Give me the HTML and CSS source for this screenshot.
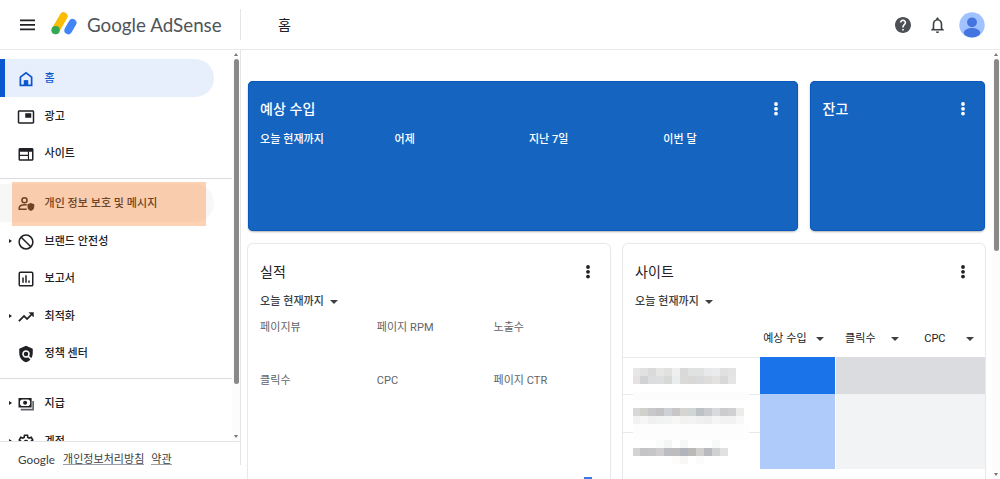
FILE: index.html
```html
<!DOCTYPE html>
<html lang="ko">

<head>
  <meta charset="UTF-8">
  <meta name="viewport" content="width=device-width, initial-scale=1.0">
  <title>Google AdSense</title>
  <link rel="stylesheet" href="styles.css">
</head>

<body>
  <header class="header">
    <div class="brand">
      <svg class="menu-icon" viewBox="0 0 14 11"><path d="M0 1.2h14M0 5.4h14M0 9.6h14" stroke="#202124" stroke-width="1.7"/></svg>
      <svg class="logo" viewBox="0 0 26 23">
        <path d="M4.6 18.1L12.6 4.3" stroke="#fbbc04" stroke-width="8" stroke-linecap="round"/>
        <path d="M17.3 18.3L21.6 10.8" stroke="#4285f4" stroke-width="7.8" stroke-linecap="round"/>
        <circle cx="4.6" cy="18.2" r="4.1" fill="#34a853"/>
      </svg>
      <span class="brand-name"><b>Google</b> AdSense</span>
    </div>
    <h1 class="page-title">홈</h1>
    <div class="header-actions">
      <svg class="help" viewBox="2 2 20 20"><path fill="#4d5156" d="M12 2C6.48 2 2 6.48 2 12s4.48 10 10 10 10-4.48 10-10S17.52 2 12 2zm1 17h-2v-2h2v2zm2.07-7.75l-.9.92C13.45 12.9 13 13.5 13 15h-2v-.5c0-1.1.45-2.1 1.17-2.83l1.24-1.26c.37-.36.59-.86.59-1.41 0-1.1-.9-2-2-2s-2 .9-2 2H8c0-2.21 1.79-4 4-4s4 1.79 4 4c0 .88-.36 1.68-.93 2.25z"/></svg>
      <svg class="bell" viewBox="4 2 16 20"><path fill="#3c4043" d="M12 22c1.1 0 2-.9 2-2h-4c0 1.100.9 2 2 2zm6-6v-5c0-3.070-1.630-5.640-4.500-6.320V4c0-.83-.67-1.500-1.500-1.500s-1.500.67-1.500 1.500v.68C7.640 5.360 6 7.920 6 11v5l-2 2v1h16v-1l-2-2zm-2 1H8v-6c0-2.480 1.510-4.500 4-4.500s4 2.020 4 4.500v6z"/></svg>
      <svg class="avatar" viewBox="0 0 26 26">
        <defs><clipPath id="avatarClip"><circle cx="13" cy="13" r="12.700"/></clipPath></defs>
        <g clip-path="url(#avatarClip)">
          <rect width="26" height="26" fill="#a0c3ff"/>
          <circle cx="13" cy="10.300" r="4.900" fill="#4374e0"/>
          <ellipse cx="13" cy="20.800" rx="8.300" ry="4.700" fill="#4374e0"/>
        </g>
      </svg>
    </div>
  </header>

  <div class="layout">
    <aside class="sidebar">
      <div class="nav-area">
        <nav class="nav">
          <a class="nav-item active">
            <svg class="icon" viewBox="0 0 24 24"><path d="M4.500 20.500V9.500L12 3.800l7.500 5.700v11z" fill="none" stroke="#0b57d0" stroke-width="2.300"/><path d="M9 21v-7.500h6V21z" fill="#0b57d0"/></svg>
            <span>홈</span>
          </a>
          <a class="nav-item">
            <svg class="icon" viewBox="0 0 24 24"><path d="M19 7h-8v6h8V7zm2-4H3c-1.100 0-2 .9-2 2v14c0 1.100.9 1.980 2 1.980h18c1.100 0 2-.88 2-1.980V5c0-1.100-.9-2-2-2zm0 16.010H3V4.980h18v14.030z"/></svg>
            <span>광고</span>
          </a>
          <a class="nav-item">
            <svg class="icon" viewBox="0 0 24 24"><path d="M20 4H4c-1.100 0-2 .9-2 2v13c0 1.100.9 2 2 2h16c1.100 0 2-.9 2-2V6c0-1.100-.9-2-2-2zM4 9h10.500v4H4V9zm0 5.500h10.500V19H4v-4.500zM20 19h-4V9h4v10z"/></svg>
            <span>사이트</span>
          </a>
          <div class="divider"></div>
          <a class="nav-item hovered">
            <svg class="icon" viewBox="0 0 24 24"><circle cx="10" cy="7" r="3.400" fill="none" stroke="#202124" stroke-width="2"/><path d="M13 19H3v-2.300c0-2.200 3.500-3.700 7-3.700 1 0 2 .1 3 .4" fill="none" stroke="#202124" stroke-width="2"/><path d="M18.500 10.500l4.500 1.800v3.300c0 2.600-1.900 4.900-4.500 5.600-2.600-.7-4.500-3-4.500-5.600v-3.300z"/></svg>
            <span>개인 정보 보호 및 메시지</span>
          </a>
          <a class="nav-item expandable">
            <svg class="icon" viewBox="0 0 24 24"><circle cx="12" cy="12" r="9.200" fill="none" stroke="#202124" stroke-width="2"/><path d="M5.600 5.600l12.800 12.800" stroke="#202124" stroke-width="2"/></svg>
            <span>브랜드 안전성</span>
          </a>
          <a class="nav-item">
            <svg class="icon" viewBox="0 0 24 24"><rect x="3" y="3" width="18" height="18" rx="1.500" fill="none" stroke="#202124" stroke-width="2"/><path d="M7 10h2v7H7zM11 7h2v10h-2zM15 14h2v3h-2z"/></svg>
            <span>보고서</span>
          </a>
          <a class="nav-item expandable">
            <svg class="icon" viewBox="0 0 24 24"><path d="M16 6l2.290 2.290-4.880 4.880-4-4L2 16.590 3.410 18l6-6 4 4 6.300-6.290L22 12V6z" stroke="#202124" stroke-width=".6"/></svg>
            <span>최적화</span>
          </a>
          <a class="nav-item">
            <svg class="icon" viewBox="0 0 24 24"><path d="M21 5l-9-4-9 4v6c0 5.550 3.840 10.740 9 12 2.300-.56 4.330-1.900 5.880-3.710l-3.120-3.120c-1.940 1.290-4.580 1.070-6.290-.64-1.950-1.950-1.950-5.120 0-7.070 1.950-1.950 5.120-1.950 7.070 0 1.710 1.710 1.920 4.350.64 6.290l2.900 2.900C20.290 15.690 21 13.380 21 11V5z"/><circle cx="12" cy="12" r="3"/></svg>
            <span>정책 센터</span>
          </a>
          <div class="divider"></div>
          <a class="nav-item expandable">
            <svg class="icon" viewBox="0 0 24 24"><path d="M3 5h15.500v10.500H3z" fill="none" stroke="#202124" stroke-width="2"/><path d="M21.500 8v11.500H5" fill="none" stroke="#5f6368" stroke-width="2.200"/><circle cx="10.800" cy="10.200" r="2.700"/><path d="M3 5h4L3 9zM18.500 5h-4l4 4zM3 15.500h4l-4-4zM18.500 15.500h-4l4-4z"/></svg>
            <span>지급</span>
          </a>
          <a class="nav-item expandable">
            <svg class="icon" viewBox="0 0 24 24"><path d="M10 3h4l.5 2.800 1.800 1 2.700-1 2 3.500-2.200 1.800v2l2.200 1.800-2 3.500-2.700-1-1.800 1L14 21h-4l-.5-2.600-1.800-1-2.700 1-2-3.500 2.200-1.800v-2L3 9.300l2-3.500 2.700 1 1.800-1z" fill="none" stroke="#202124" stroke-width="2.200"/><circle cx="12" cy="12" r="3"/></svg>
            <span>계정</span>
          </a>
          <div class="highlight"></div>
        </nav>
        <div class="scrollbar">
          <i class="arrow up"></i>
          <i class="thumb"></i>
          <i class="arrow down"></i>
        </div>
      </div>
      <footer class="legal">
        <span class="google">Google</span>
        <a>개인정보처리방침</a>
        <a>약관</a>
      </footer>
    </aside>

    <main class="content">
      <div class="cards">
        <section class="card blue earnings">
          <div class="card-head">
            <h2>예상 수입</h2>
            <svg class="more" viewBox="0 0 4 14"><circle cx="2" cy="2" r="1.900"/><circle cx="2" cy="6.800" r="1.900"/><circle cx="2" cy="11.600" r="1.900"/></svg>
          </div>
          <div class="periods">
            <span>오늘 현재까지</span>
            <span>어제</span>
            <span>지난 7일</span>
            <span>이번 달</span>
          </div>
        </section>

        <section class="card blue balance">
          <div class="card-head">
            <h2>잔고</h2>
            <svg class="more" viewBox="0 0 4 14"><circle cx="2" cy="2" r="1.900"/><circle cx="2" cy="6.800" r="1.900"/><circle cx="2" cy="11.600" r="1.900"/></svg>
          </div>
        </section>

        <section class="card performance">
          <div class="card-head">
            <h2>실적</h2>
            <svg class="more" viewBox="0 0 4 14"><circle cx="2" cy="2" r="1.900"/><circle cx="2" cy="6.800" r="1.900"/><circle cx="2" cy="11.600" r="1.900"/></svg>
          </div>
          <div class="dropdown">오늘 현재까지<i class="caret"></i></div>
          <div class="metrics">
            <span>페이지뷰</span>
            <span>페이지 RPM</span>
            <span>노출수</span>
            <span>클릭수</span>
            <span>CPC</span>
            <span>페이지 CTR</span>
          </div>
          <div class="chart-bar"></div>
        </section>

        <section class="card sites">
          <div class="card-head">
            <h2>사이트</h2>
            <svg class="more" viewBox="0 0 4 14"><circle cx="2" cy="2" r="1.900"/><circle cx="2" cy="6.800" r="1.900"/><circle cx="2" cy="11.600" r="1.900"/></svg>
          </div>
          <div class="dropdown">오늘 현재까지<i class="caret"></i></div>
          <div class="site-head">
            <span></span>
            <span>예상 수입<i class="caret"></i></span>
            <span>클릭수<i class="caret"></i></span>
            <span>CPC<i class="caret"></i></span>
          </div>
          <div class="site-table">
            <div class="site-row first"><span></span><span class="earn"></span><span class="rest"></span></div>
            <div class="site-row"><span></span><span class="earn"></span><span class="rest"></span></div>
            <div class="site-row"><span></span><span class="earn"></span><span class="rest"></span></div>
            <div class="mosaic" id="mosaic"></div>
          </div>
        </section>
      </div>
      <div class="scrollbar">
        <i class="arrow up"></i>
        <i class="thumb"></i>
        <i class="arrow down"></i>
      </div>
    </main>
  </div>

  <script>
// Masked site names, one string of colours per 8px line ('-' leaves the cell empty)
const maskRows = [
  'e8e7e7 e1e1e1 dadada e6e6e6 e1e1e0 efefef d9d9d9 e0e2e1 e1e1e1 e8e9ea ebebeb e0e0e0 e3e3e3 - -',
  'e7e2e1 d2d2d2 dcdddf dddee0 d7d9d6 e9edee dcdad9 d9d8d7 d9dadb dddddd e3e2e1 d8d8d9 e5e5e6 - -',
  '- - - - - - - - - - - - - - -',
  'fcfcfc fcfcfc fcfcfc fcfcfc fcfcfc fcfcfc fcfcfc fcfcfc fcfcfc fcfcfc fcfcfc fcfcfc fcfcfc fcfcfc fcfcfc',
  '- - - - - - - - - - - - - - -',
  'd9d8d6 d1d1cc c8c7c9 c4c3c3 ced1d5 c7c7c8 d6d5d1 d1d5d6 bdc2c7 c9cbce dadadd cccccd d0d0d2 ececeb -',
  'f2f2f2 f6f6f6 f0f0f1 f2f2f2 f1f4f3 f7f7f7 f2f2f1 f3f3f3 f0f0f0 eeeeee f5f5f5 f2f2f2 f2f2f2 f8f8f8 -',
  'fdfdfd fdfdfd fdfdfd fdfdfd fdfdfd fdfdfd fdfdfd fdfdfd fdfdfd fdfdfd fdfdfd fdfdfd fdfdfd fdfdfd fdfdfd',
  'fdfdfd fdfdfd fdfdfd fdfdfd fdfdfd fdfdfd fdfdfd fdfdfd fdfdfd fdfdfd fdfdfd fdfdfd fdfdfd fdfdfd fdfdfd',
  '- - - fbfbfb f4f5f5 - f6f7f7 - - - f7f9f8 - - - -',
  'd3d3d4 c4c4c5 c6c6c8 cfcdcf bcbdc2 bfbcbe b1b4bc bab9b7 d0cfcd b8babf d1d1d1 e1e1e2 - - -',
  '- - - - - fdfcfb f7f7f8 - fbfbfb - - - - - -'
];

const mosaic = document.getElementById('mosaic');
maskRows.forEach(row => {
  row.split(' ').forEach(color => {
    const cell = document.createElement('i');
    if (color !== '-') cell.style.background = '#' + color;
    mosaic.appendChild(cell);
  });
});
  </script>
</body>

</html>
```
FILE: styles.css
```css
* {
  box-sizing: border-box;
}

body {
  margin: 0;
  height: 479px;
  overflow: hidden;
  background: #fff;
  color: #202124;
  font-family: Roboto, "Noto Sans CJK KR", sans-serif;
  font-size: 11px;
  letter-spacing: 0.05px;
}

svg {
  display: block;
  flex: none;
}

h1,
h2 {
  margin: 0;
  font-weight: 400;
}

/* Top bar */
.header {
  display: flex;
  align-items: center;
  height: 50px;
  border-bottom: 1px solid #e8e9ea;
}

.brand {
  display: flex;
  align-items: center;
  width: 241px;
  height: 31px;
  padding-left: 19.5px;
  border-right: 1px solid #e4e5e7;
}

.menu-icon {
  width: 15px;
  height: 12px;
}

.logo {
  width: 26px;
  height: 23px;
  margin: 0 10px 2px 16.5px;
}

.brand-name {
  padding-top: 1px;
  font-family: Lato, sans-serif;
  font-size: 18.8px;
  line-height: 24px;
  letter-spacing: 0;
  color: #50545a;
  white-space: nowrap;
}

.brand-name b {
  font-weight: 400;
}

.page-title {
  flex: 1;
  padding-left: 37px;
  font-size: 14px;
  line-height: 20px;
}

.header-actions {
  display: flex;
  align-items: center;
  padding-right: 15px;
}

.help {
  width: 16px;
  height: 16px;
}

.bell {
  width: 13px;
  height: 16px;
  margin: 0 15px 0 20px;
}

.avatar {
  width: 26px;
  height: 26px;
}

.layout {
  display: flex;
  height: 429px;
}

/* Sidebar */
.sidebar {
  display: flex;
  flex-direction: column;
  width: 241px;
  height: 415px;
  border-right: 1px solid #e4e5e7;
}

.nav-area {
  display: flex;
  height: 391px;
}

.nav {
  position: relative;
  width: 232px;
  padding-top: 9.4px;
  overflow: hidden;
}

.nav-item {
  position: relative;
  display: flex;
  align-items: center;
  width: 213.5px;
  height: 37.5px;
  padding: 0 0 0 17px;
  border-radius: 0 19px 19px 0;
  font-weight: 500;
  white-space: nowrap;
}

.nav-item span {
  padding-bottom: 2px;
}

.icon {
  width: 18px;
  height: 18px;
  margin: 2px 9.5px 0 0;
  fill: #202124;
}

.nav-item.active {
  padding-left: 12px;
  border-left: 5px solid #0b57d0;
  border-radius: 0 19px 19px 0;
  background: #e7effd;
  color: #0b57d0;
}

.nav-item.hovered {
  background: #f7f7f7;
}

.expandable::before {
  content: "";
  position: absolute;
  left: 9px;
  border: 2.5px solid transparent;
  border-left: 3px solid #202124;
  border-right: 0;
}

.divider {
  height: 1px;
  margin: 6px 0 5.5px;
  background: #dadce0;
}

/* Marker over the privacy item */
.highlight {
  position: absolute;
  left: 12px;
  top: 132px;
  width: 194px;
  height: 44px;
  background: rgba(250, 128, 42, 0.36);
}

.legal {
  display: flex;
  height: 24px;
  padding: 7px 0 0 18px;
  border-top: 1px solid #e4e5e7;
  color: #3c4043;
}

.legal .google {
  margin-right: 8px;
  font-family: Lato, sans-serif;
  font-size: 11.7px;
  line-height: 20px;
}

.legal a {
  height: 16px;
  margin-right: 7px;
  border-bottom: 1px solid #9aa0a6;
  line-height: 21px;
}

/* Scrollbars */
.scrollbar {
  display: flex;
  flex-direction: column;
  align-items: center;
  width: 8px;
  background: #fcfcfc;
}

.thumb {
  width: 5px;
  border-radius: 3px;
  background: #898989;
}

.arrow {
  border: 2.5px solid transparent;
}

.arrow.up {
  margin-top: 3px;
  border-top: 0;
  border-bottom: 3px solid #757575;
}

.arrow.down {
  margin: auto 0 3px;
  border-bottom: 0;
  border-top: 3px solid #757575;
}

.nav-area .scrollbar .thumb {
  height: 325px;
  margin-top: 3px;
}

.content .scrollbar .thumb {
  height: 192px;
  margin-top: 3px;
}

/* Cards */
.content {
  display: flex;
  justify-content: space-between;
  flex: 1;
  overflow: hidden;
}

.cards {
  display: grid;
  grid-template-columns: 362.5px 175px 175px;
  grid-template-rows: 150px 260px;
  gap: 12.5px;
  padding: 31.4px 0 0 6.6px;
}

.card {
  padding: 18px 12.5px 0;
  border-radius: 5px;
  background: #fff;
  box-shadow: 0 0 1px 1px #e6e7e8;
}

.card.blue {
  background: #1565c0;
  color: #fff;
  box-shadow: inset 0 0 0 1px #0b57bd, 0 1px 2px rgba(60, 64, 67, 0.4);
}

.earnings,
.sites {
  grid-column: span 2;
}

.card-head {
  display: flex;
  align-items: center;
  justify-content: space-between;
  height: 20px;
  padding-right: 7.5px;
}

.card-head h2 {
  font-size: 14px;
  line-height: 20px;
}

.blue h2 {
  padding-bottom: 1px;
  font-weight: 500;
}

.more {
  width: 4px;
  height: 14px;
  fill: currentColor;
}

.periods {
  display: grid;
  grid-template-columns: repeat(4, 134.4px);
  margin-top: 13px;
  font-weight: 500;
  line-height: 16px;
}

.dropdown {
  display: flex;
  align-items: center;
  margin-top: 12px;
  line-height: 16px;
  color: #3c4043;
  font-weight: 500;
}

.caret {
  display: inline-block;
  margin-left: 6px;
  border: 4px solid transparent;
  border-top-color: #3c4043;
  border-bottom: 0;
}

.metrics {
  display: grid;
  grid-template-columns: repeat(3, 116.7px);
  row-gap: 36.5px;
  margin-top: 10.2px;
  line-height: 16px;
  color: #5f6368;
}

.chart-bar {
  width: 8px;
  height: 20px;
  margin: 88.5px 0 0 324px;
  background: #3b78e7;
}

.card.sites {
  padding-left: 0;
  padding-right: 0;
}

.sites .card-head {
  padding: 0 20px 0 12.5px;
}

.sites .dropdown {
  padding-left: 12.5px;
}

.site-head,
.site-row {
  display: grid;
  grid-template-columns: 137.5px 75px 1fr;
}

.site-head {
  grid-template-columns: 137.5px 75px 75px 75px;
  height: 47px;
  padding-top: 12px;
  padding-bottom: 1px;
  line-height: 18px;
  color: #202124;
}

.site-head span {
  display: flex;
  align-items: center;
  justify-content: flex-end;
  padding-right: 11.5px;
}

.site-head .caret {
  margin-left: 9px;
}

.site-head span:nth-child(3) .caret {
  margin-left: 15px;
}

.site-head span:nth-child(4) .caret {
  margin-left: 20px;
}

.site-table {
  position: relative;
}

.site-row {
  height: 37.5px;
}

.site-row span:first-child {
  border-top: 1px solid #e8e9eb;
}

.earn {
  background: #aecbfa;
}

.rest {
  margin-left: 1px;
  background: #f1f3f4;
}

.first .earn {
  background: #1a73e8;
}

.first .rest {
  background: #dadce0;
}

.mosaic {
  position: absolute;
  left: 10.4px;
  top: 11px;
  display: grid;
  grid-template-columns: 7px repeat(13, 8px) 5px;
  grid-auto-rows: 8px;
}
```
